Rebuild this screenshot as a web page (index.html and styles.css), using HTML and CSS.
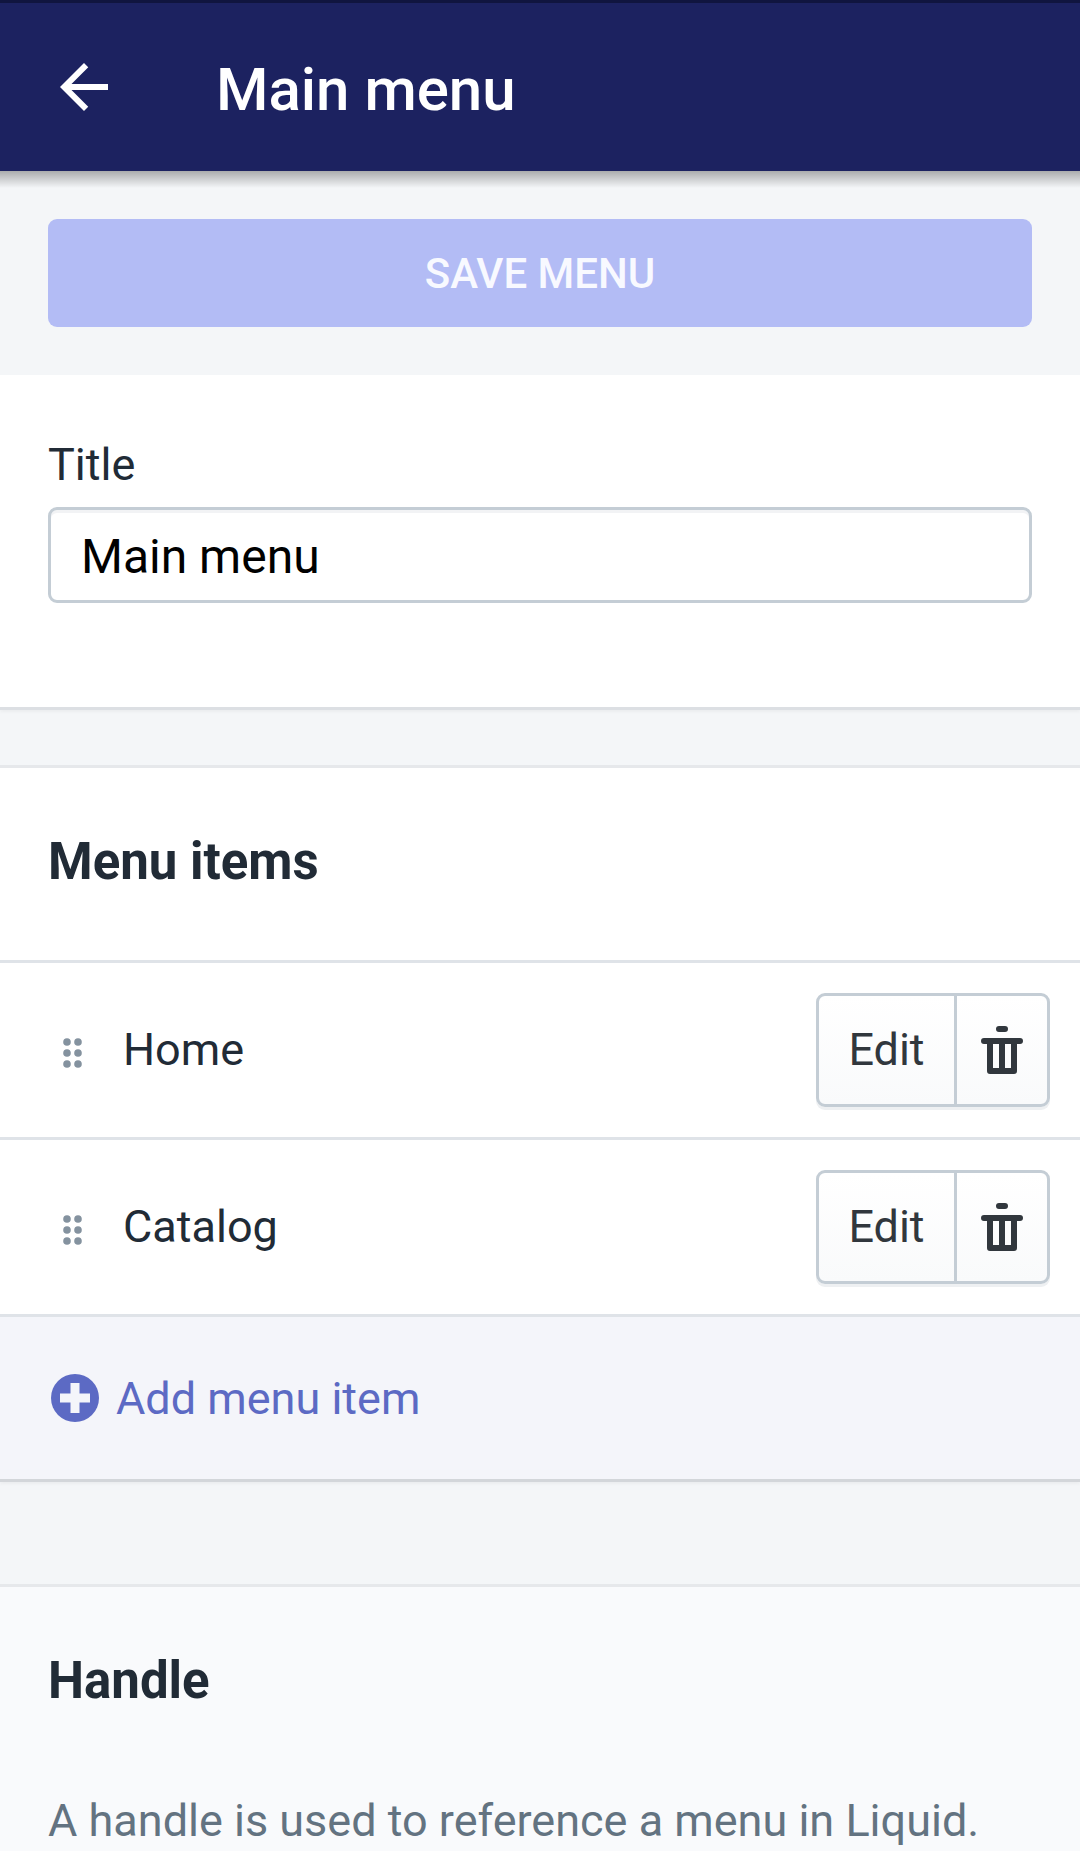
FILE: index.html
```html
<!DOCTYPE html>
<html lang="en">
<head>
<meta charset="utf-8">
<title>Main menu</title>
<link rel="stylesheet" href="styles.css">
</head>
<body>
<div class="screen">
  <header class="topbar">
    <svg class="back" viewBox="0 0 24 24"><path fill="#fff" d="M20 11H7.830l5.590-5.590L12 4l-8 8 8 8 1.410-1.410L7.830 13H20v-2z"/></svg>
    <h1 class="topbar-title">Main menu</h1>
  </header>
  <div class="save-band"><button class="save">SAVE MENU</button></div>
  <section class="card title-card">
    <label class="field-label">Title</label>
    <div class="input">Main menu</div>
  </section>
  <section class="card items-card">
    <h2 class="items-heading">Menu items</h2>
    <div class="row">
      <svg class="drag" viewBox="0 0 19 30"><g fill="#84929f"><circle cx="4" cy="4" r="3.800"/><circle cx="15" cy="4" r="3.800"/><circle cx="4" cy="15" r="3.800"/><circle cx="15" cy="15" r="3.800"/><circle cx="4" cy="26" r="3.800"/><circle cx="15" cy="26" r="3.800"/></g></svg>
      <span class="row-name">Home</span>
      <div class="btn-group">
        <span class="btn-edit">Edit</span>
        <span class="btn-trash"><svg class="trash" viewBox="0 0 42 48"><path fill="#31373d" fill-rule="evenodd" d="M18 0h6a3 3 0 0 1 0 6h-6a3 3 0 0 1 0-6zM3 12h36a3 3 0 0 1 0 6h-3v27a3 3 0 0 1-3 3H9a3 3 0 0 1-3-3V18H3a3 3 0 0 1 0-6zm9 6v24h6V18zm12 0v24h6V18z"/></svg></span>
      </div>
    </div>
    <div class="row">
      <svg class="drag" viewBox="0 0 19 30"><g fill="#84929f"><circle cx="4" cy="4" r="3.800"/><circle cx="15" cy="4" r="3.800"/><circle cx="4" cy="15" r="3.800"/><circle cx="15" cy="15" r="3.800"/><circle cx="4" cy="26" r="3.800"/><circle cx="15" cy="26" r="3.800"/></g></svg>
      <span class="row-name">Catalog</span>
      <div class="btn-group">
        <span class="btn-edit">Edit</span>
        <span class="btn-trash"><svg class="trash" viewBox="0 0 42 48"><path fill="#31373d" fill-rule="evenodd" d="M18 0h6a3 3 0 0 1 0 6h-6a3 3 0 0 1 0-6zM3 12h36a3 3 0 0 1 0 6h-3v27a3 3 0 0 1-3 3H9a3 3 0 0 1-3-3V18H3a3 3 0 0 1 0-6zm9 6v24h6V18zm12 0v24h6V18z"/></svg></span>
      </div>
    </div>
    <div class="add-row">
      <svg class="plus" viewBox="0 0 48 48"><circle cx="24" cy="24" r="24" fill="#5c6ac4"/><path fill="#f4f5fa" d="M19.500 9h9v10.500H39v9H28.500V39h-9V28.500H9v-9h10.500z"/></svg>
      <span class="add-label">Add menu item</span>
    </div>
  </section>
  <section class="handle-card">
    <h2 class="handle-heading">Handle</h2>
    <p class="handle-text">A handle is used to reference a menu in Liquid.</p>
  </section>
</div>
</body>
</html>
```
FILE: styles.css
```css
* { box-sizing: border-box; }
html, body { margin: 0; padding: 0; height: 1851px; overflow: hidden; }
body { background: #f4f6f8; font-family: Roboto, "Liberation Sans", sans-serif; color: #212b36; }
.screen { width: 1080px; height: 1851px; overflow: hidden; }

.topbar {
  position: relative;
  z-index: 2;
  display: flex;
  align-items: center;
  height: 171px;
  padding-left: 48px;
  background: #1c2260;
  border-top: 3px solid #10153f;
}
.topbar::after {
  content: "";
  position: absolute;
  left: 0;
  right: 0;
  top: 100%;
  height: 17px;
  background: linear-gradient(rgba(0, 0, 0, 0.3), rgba(0, 0, 0, 0));
}
.back { width: 72px; height: 72px; flex: none; }
.topbar-title { margin: 5px 0 0 96px; font-size: 60px; font-weight: 500; color: #fff; line-height: 72px; }

.save-band { padding: 48px; }
.save {
  display: block;
  width: 100%;
  height: 108px;
  border: 0;
  border-radius: 9px;
  background: #b3bcf5;
  color: #f8f9ff;
  font-family: inherit;
  font-size: 42px;
  font-weight: 500;
}

.card { background: #fff; }
.title-card {
  height: 335px;
  padding: 60px 48px 0;
  border-bottom: 3px solid #dcdfe3;
  box-shadow: 0 2px 3px rgba(0, 0, 0, 0.04);
}
.field-label { display: block; height: 72px; font-size: 45px; line-height: 60px; color: #212b36; }
.input {
  height: 96px;
  padding: 2px 30px 0;
  border: 3px solid #c4cdd5;
  border-radius: 9px;
  box-shadow: inset 0 3px 0 #f2f3f5;
  font-size: 48px;
  line-height: 90px;
  color: #000;
}

.items-card { margin-top: 55px; border-top: 3px solid #e6e8eb; border-bottom: 3px solid #d3d6da; box-shadow: 0 2px 3px rgba(0, 0, 0, 0.04); }
.items-heading { margin: 0; height: 192px; padding: 0 48px; font-size: 51px; font-weight: 700; line-height: 188px; color: #212b36; }

.row {
  display: flex;
  align-items: center;
  height: 177px;
  padding: 0 30px 0 63px;
  border-top: 3px solid #dfe3e8;
}
.drag { width: 19px; height: 30px; flex: none; margin-top: 6px; }
.row-name { margin-left: 41px; flex: 1; font-size: 45px; line-height: 60px; color: #212b36; margin-top: -1px; }

.btn-group {
  display: flex;
  height: 114px;
  border: 3px solid #c4cdd5;
  border-radius: 9px;
  background: linear-gradient(#ffffff, #f9fafb);
  box-shadow: 0 3px 0 #eef0f2;
}
.btn-edit {
  display: flex;
  align-items: center;
  justify-content: center;
  width: 138px;
  padding-bottom: 2px;
  border-right: 3px solid #c4cdd5;
  font-size: 45px;
  color: #31373d;
}
.btn-trash { display: flex; align-items: center; justify-content: center; width: 90px; }
.trash { width: 42px; height: 48px; flex: none; }

.add-row {
  display: flex;
  align-items: center;
  height: 165px;
  padding: 0 0 0 51px;
  background: #f4f5fa;
  border-top: 3px solid #dfe3e8;
}
.plus { width: 48px; height: 48px; flex: none; }
.add-label { margin: 1px 0 0 17px; font-size: 45px; line-height: 60px; color: #5c6ac4; }

.handle-card {
  margin-top: 102px;
  padding: 0 48px;
  height: 400px;
  background: #f9fafc;
  border-top: 3px solid #e6e8eb;
}
.handle-heading { margin: 0; padding-top: 58px; font-size: 51px; font-weight: 700; line-height: 72px; color: #212b36; }
.handle-text { margin: 74px 0 0; font-size: 45px; line-height: 60px; color: #637381; white-space: nowrap; }
```
